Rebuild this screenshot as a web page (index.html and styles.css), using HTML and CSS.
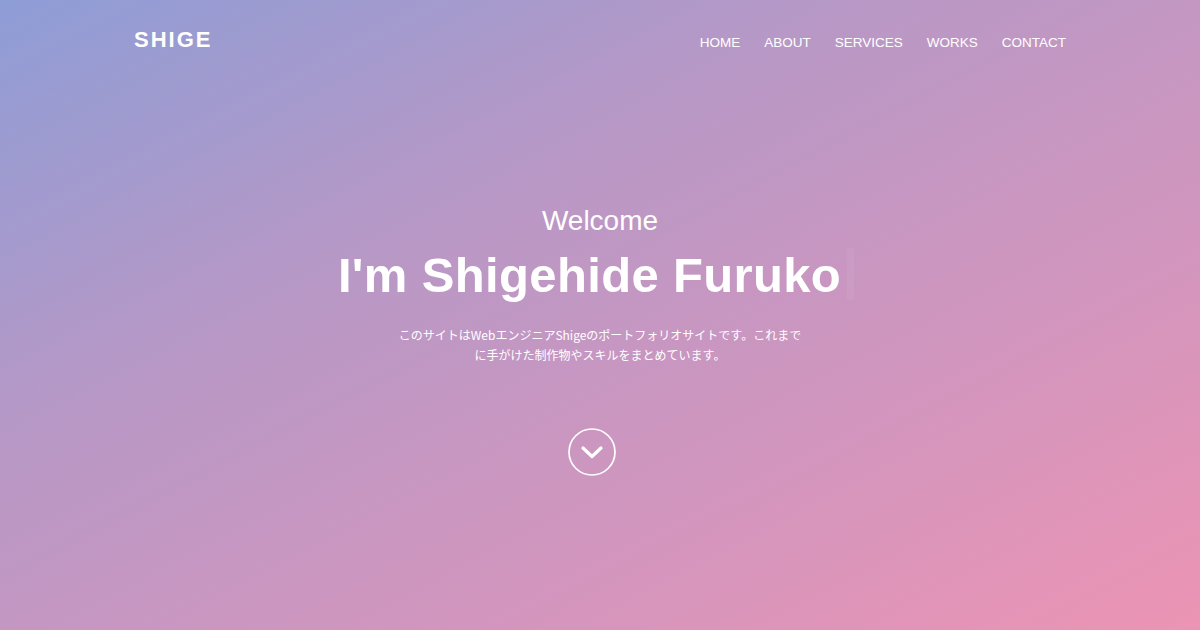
FILE: index.html
```html
<!DOCTYPE html>
<html lang="ja">
<head>
<meta charset="utf-8">
<title>SHIGE</title>
<link rel="stylesheet" href="styles.css">
</head>
<body>
<div class="page">
  <header class="header">
    <a class="logo" href="#">SHIGE</a>
    <nav class="nav">
      <a href="#">HOME</a>
      <a href="#">ABOUT</a>
      <a href="#">SERVICES</a>
      <a href="#">WORKS</a>
      <a href="#">CONTACT</a>
    </nav>
  </header>
  <main class="hero">
    <p class="welcome">Welcome</p>
    <h1 class="name">I'm Shigehide Furuko<span class="cursor"></span></h1>
    <p class="lead">このサイトはWebエンジニアShigeのポートフォリオサイトです。これまで<br>に手がけた制作物やスキルをまとめています。</p>
    <a class="scroll" href="#">
      <svg width="48" height="48" viewBox="0 0 48 48" aria-hidden="true">
        <circle cx="24" cy="24" r="23" fill="none" stroke="#fff" stroke-width="1.7"/>
        <path d="M15 20 L24 28.5 L33 20" fill="none" stroke="#fff" stroke-width="3.2" stroke-linecap="round" stroke-linejoin="round"/>
      </svg>
    </a>
  </main>
</div>
</body>
</html>
```

FILE: styles.css
```css
* { box-sizing: border-box; }
html, body { margin: 0; padding: 0; }
body {
  width: 1200px;
  height: 630px;
  overflow: hidden;
  font-family: "Liberation Sans", "Noto Sans CJK JP", sans-serif;
  color: #fff;
}
.page {
  height: 630px;
  background: linear-gradient(to bottom right, #8e9dd6 0%, #b798c6 35%, #cf96bf 65%, #ec94b3 100%);
}
.header {
  width: 932px;
  margin: 0 auto;
  padding-top: 29px;
  display: flex;
  justify-content: space-between;
  align-items: baseline;
}
.logo {
  color: #fff;
  text-decoration: none;
  font-weight: 700;
  font-size: 22px;
  line-height: 22px;
  letter-spacing: 2px;
}
.nav {
  display: flex;
  gap: 24px;
}
.nav a {
  color: #fff;
  text-decoration: none;
  font-size: 13.5px;
  line-height: 22px;
  letter-spacing: 0;
}
.hero {
  display: flex;
  flex-direction: column;
  align-items: center;
  text-align: center;
  padding-top: 150px;
}
.welcome {
  margin: 0;
  font-size: 28px;
  font-weight: 300;
  line-height: 34px;
}
.name {
  margin: 8px 0 0;
  font-size: 49px;
  font-weight: 700;
  line-height: 59px;
  letter-spacing: 0.35px;
}
.cursor {
  display: inline-block;
  width: 7px;
  height: 52px;
  margin-left: 6px;
  margin-right: 8px;
  vertical-align: -8px;
  background: rgba(255, 255, 255, 0.05);
}
.lead {
  margin: 20px 0 0;
  font-size: 12px;
  line-height: 20px;
  font-family: "Noto Sans CJK JP", "Liberation Sans", sans-serif;
}
.scroll {
  display: block;
  width: 48px;
  height: 48px;
  margin-top: 63px;
  margin-right: 17px;
}
.scroll svg { display: block; }
```
